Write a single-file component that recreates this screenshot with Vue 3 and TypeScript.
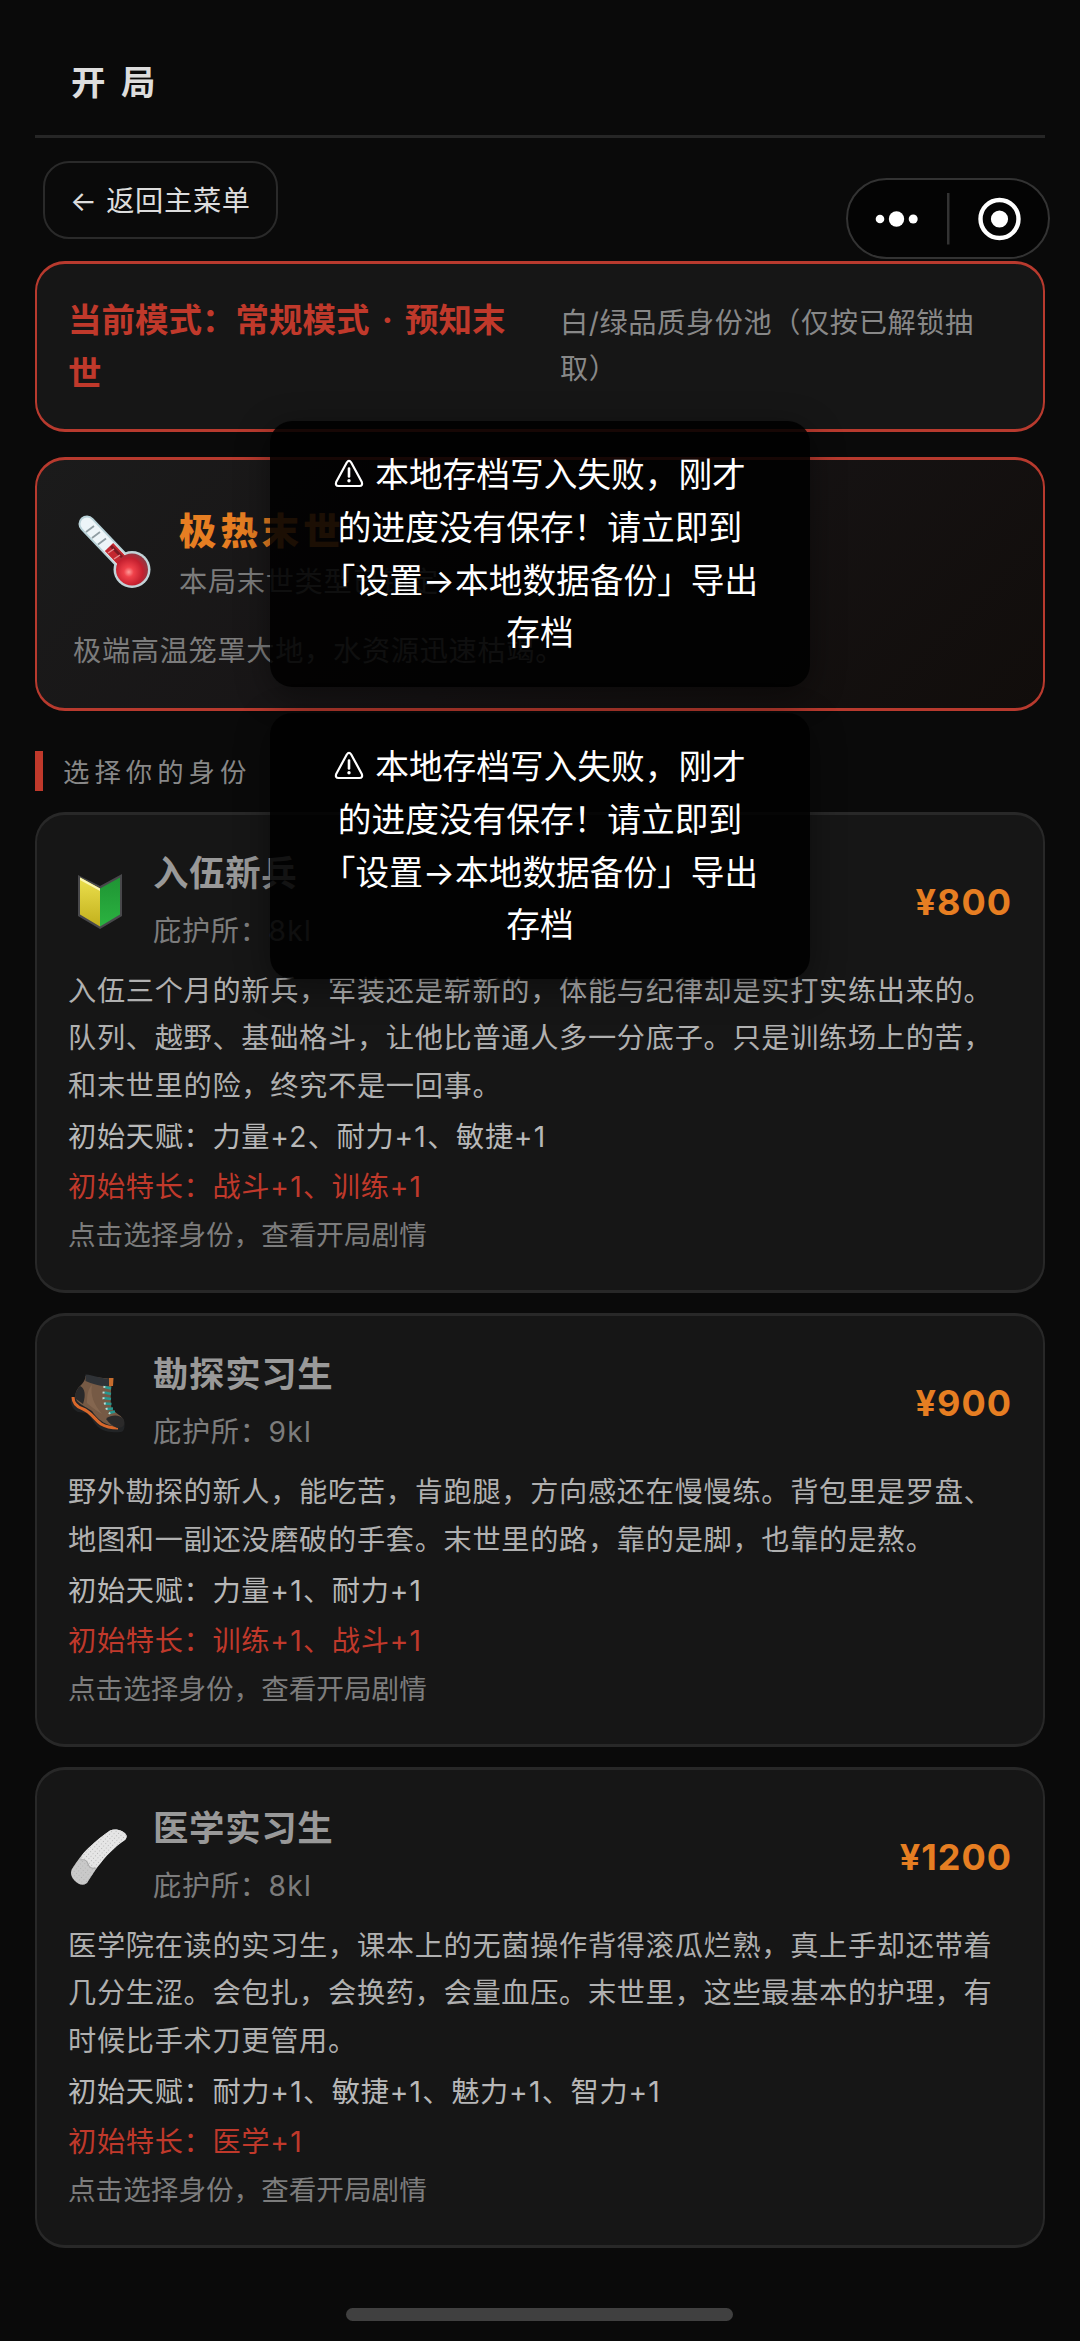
<script setup lang="ts">
interface Role {
  icon: 'badge' | 'boot' | 'bandage'
  name: string
  shelter: string
  price: string
  desc: string[]
  talent: string
  special: string
}

const roles: Role[] = [
  {
    icon: 'badge',
    name: '入伍新兵',
    shelter: '8kl',
    price: '¥800',
    desc: [
      '入伍三个月的新兵，军装还是崭新的，体能与纪律却是实打实练出来的。',
      '队列、越野、基础格斗，让他比普通人多一分底子。只是训练场上的苦，',
      '和末世里的险，终究不是一回事。',
    ],
    talent: '力量+2、耐力+1、敏捷+1',
    special: '战斗+1、训练+1',
  },
  {
    icon: 'boot',
    name: '勘探实习生',
    shelter: '9kl',
    price: '¥900',
    desc: [
      '野外勘探的新人，能吃苦，肯跑腿，方向感还在慢慢练。背包里是罗盘、',
      '地图和一副还没磨破的手套。末世里的路，靠的是脚，也靠的是熬。',
    ],
    talent: '力量+1、耐力+1',
    special: '训练+1、战斗+1',
  },
  {
    icon: 'bandage',
    name: '医学实习生',
    shelter: '8kl',
    price: '¥1200',
    desc: [
      '医学院在读的实习生，课本上的无菌操作背得滚瓜烂熟，真上手却还带着',
      '几分生涩。会包扎，会换药，会量血压。末世里，这些最基本的护理，有',
      '时候比手术刀更管用。',
    ],
    talent: '耐力+1、敏捷+1、魅力+1、智力+1',
    special: '医学+1',
  },
]

const toasts: string[][] = [
  ['本地存档写入失败，刚才', '的进度没有保存！请立即到', '「设置→本地数据备份」导出', '存档'],
  ['本地存档写入失败，刚才', '的进度没有保存！请立即到', '「设置→本地数据备份」导出', '存档'],
]

// Splits a bonus list so the "+n" parts can be tracked a little wider.
const parts = (text: string): string[] => text.split(/(\+\d)/).filter(Boolean)
</script>

<template>
  <div class="page">
    <header class="header"><h1>开局</h1></header>

    <button class="back"><span class="arrow">←</span> 返回主菜单</button>

    <section class="card mode">
      <div class="mode-name">当前模式：常规模式 · 预知末<br />世</div>
      <div class="mode-pool">白/绿品质身份池（仅按已解锁抽<br />取）</div>
    </section>

    <section class="card doom">
      <div class="doom-head">
        <svg class="thermo" viewBox="0 0 74 74">
          <defs>
            <radialGradient id="bulb" cx="40%" cy="58%" r="62%">
              <stop offset="0" stop-color="#ff9a98" />
              <stop offset=".25" stop-color="#f0414a" />
              <stop offset=".7" stop-color="#c4202f" />
              <stop offset="1" stop-color="#8f3a44" />
            </radialGradient>
          </defs>
          <path d="M9 9 L50 52" stroke="#b9d2d8" stroke-width="17" stroke-linecap="round" />
          <circle cx="54" cy="54.500" r="18.500" fill="#c3d3d8" />
          <path d="M9 9 L50 52" stroke="#edf5f8" stroke-width="13" stroke-linecap="round" />
          <path d="M31 32 L50 52" stroke="#c3272f" stroke-width="11.500" />
          <path d="M33 31 L50 48" stroke="#7c1a22" stroke-width="3" />
          <path d="M8 17 L16 11 M14 23 L22 17 M20 29.500 L28 23.500" stroke="#8f9da2" stroke-width="1.800" />
          <path d="M30 38 L36 34 M36 44 L42 40" stroke="#e58a8c" stroke-width="1.500" />
          <circle cx="54" cy="54.500" r="16" fill="url(#bulb)" />
        </svg>
        <div>
          <div class="doom-name">极热末世</div>
          <div class="doom-sub">本局末世类型已锁定</div>
        </div>
      </div>
      <div class="doom-desc">极端高温笼罩大地，水资源迅速枯竭。</div>
    </section>

    <h2 class="section-title">选择你的身份</h2>

    <section v-for="role in roles" :key="role.name" class="card role">
      <div class="role-head">
        <svg v-if="role.icon === 'badge'" class="role-icon" viewBox="0 0 60 60">
          <defs>
            <linearGradient id="yl" x1="0" y1="0" x2="0" y2="1">
              <stop offset="0" stop-color="#ece04e" />
              <stop offset="1" stop-color="#c2b01c" />
            </linearGradient>
            <linearGradient id="gr" x1="0" y1="0" x2="0" y2="1">
              <stop offset="0" stop-color="#1f9434" />
              <stop offset="1" stop-color="#2bb340" />
            </linearGradient>
          </defs>
          <path d="M10 3 L32 14 L54 2 L54 44 L32 57 L10 44 Z" fill="#48484b" />
          <path d="M12 5.500 L32 16.500 L32 54.500 L12 42.500 Z" fill="url(#yl)" />
          <path d="M52 5.500 L32 16.500 L32 54.500 L52 42.500 Z" fill="url(#gr)" />
          <path d="M12 5.500 L32 16.500 L32 19 L12 8 Z" fill="#fbf6b0" />
        </svg>
        <svg v-else-if="role.icon === 'boot'" class="role-icon" viewBox="0 0 60 60">
          <path d="M3 25 C2 31 5 37 10 39 L18 40 C23 43 25 49 30 54 C36 59 46 60 53 59 C57 58 57 52 56 48 L40 46 L12 22 Z" fill="#222426" />
          <path d="M5 24 C5 30 9 34 15 36 C23 39 26 46 33 51 C38 54 44 55 50 55" fill="none" stroke="#d9682b" stroke-width="3" />
          <path d="M17.500 3 L44 6 C43 17 42 27 43.500 35 C47 41 55 42 56 49 C55 54 47 54 41 52 C33 49 28 44 24 38 C20 35 14 33 9 28 C6 22 8 17 12 13 C15 10 17 8 17.500 3 Z" fill="#765a45" />
          <path d="M24 12 C22 22 26 32 34 41 C29 38 22 33 19 30 C19 22 20 16 24 12 Z" fill="#84664f" />
          <path d="M12 13 C17 15 18 22 15 31 L8 26 C6 22 8 17 12 13 Z" fill="#29292a" />
          <path d="M17.500 1.500 C26 2 34 6 42 6 L41 13 C33 14 25 11 17.500 8 Z" fill="#2f3236" />
          <path d="M41 5 L45.500 5 L45 13 L41 13 Z" fill="#c66c2d" />
          <path d="M38 46 C44 41 52 42 55.500 46 C58 52 55 55 49 55 C44 53 41 50 38 46 Z" fill="#2b2a2a" />
          <path d="M37 14 L43 15.500 M36.500 19.500 L43 21 M36 25 L43 26 M37 30.500 L43.500 31 M39 36 L45 35.500 M41 40 L47 38.500" stroke="#27968e" stroke-width="2.400" />
          <path d="M36.500 13 L35.500 20 L35.500 26 L37 31 L39 37 L42 41" fill="none" stroke="#b9ddd6" stroke-width="2" stroke-dasharray="2 3.600" />
        </svg>
        <svg v-else class="role-icon" viewBox="0 0 60 60">
          <defs>
            <pattern id="holes" width="3.200" height="3.200" patternUnits="userSpaceOnUse" patternTransform="rotate(40)">
              <circle cx="1.200" cy="1.200" r=".55" fill="#b0b0b0" />
            </pattern>
          </defs>
          <path d="M4 42 C9 34 15 26 21 20.500 C28 14 35 8 42 3.500 C48 1 57 4 58.700 9 C58.500 12 57 13 54 15 C47 20 40 27 35 33 C29 40 24 48 20 54.500 C18 59 11 58.500 7 54 C3 50 2 46 4 42 Z" fill="#c9c9c9" />
          <path d="M13.500 29 C16 25 18.500 23 21 20.500 C28 14 35 8 42 3.500 C48 1 57 4 58.700 9 C58.500 12 57 13 54 15 C47 20 40 27 35 33 C32 37 30 39 28 41 C24 42 21 40 20 37 C18 34 16 33 13.500 33 Z" fill="#e6e6e6" />
          <path d="M4 42 C9 34 15 26 21 20.500 C28 14 35 8 42 3.500 C48 1 57 4 58.700 9 C58.500 12 57 13 54 15 C47 20 40 27 35 33 C29 40 24 48 20 54.500 C18 59 11 58.500 7 54 C3 50 2 46 4 42 Z" fill="url(#holes)" />
          <path d="M12.500 33 C17 32 19 34 20 37 C21 40 24 42 28 41" fill="none" stroke="#a8a8a8" stroke-width="1.100" />
        </svg>
        <div class="role-info">
          <div class="role-name">{{ role.name }}</div>
          <div class="role-shelter">庇护所：<span class="num">{{ role.shelter }}</span></div>
        </div>
        <div class="role-price">{{ role.price }}</div>
      </div>
      <div class="role-desc">
        <div v-for="line in role.desc" :key="line">{{ line }}</div>
      </div>
      <div class="role-talent">初始天赋：<span v-for="(p, i) in parts(role.talent)" :key="i" :class="{ num: p[0] === '+' }">{{ p }}</span></div>
      <div class="role-special">初始特长：<span v-for="(p, i) in parts(role.special)" :key="i" :class="{ num: p[0] === '+' }">{{ p }}</span></div>
      <div class="role-hint">点击选择身份，查看开局剧情</div>
    </section>

    <div class="capsule">
      <svg viewBox="0 0 204 82">
        <circle cx="34" cy="41" r="4.300" fill="#fff" />
        <circle cx="50.500" cy="41" r="7.700" fill="#fff" />
        <circle cx="67.200" cy="41" r="4.500" fill="#fff" />
        <rect x="101" y="15" width="2.500" height="51.500" fill="#333" />
        <circle cx="153.500" cy="41" r="19" fill="none" stroke="#fff" stroke-width="4.400" />
        <circle cx="153.500" cy="41" r="8.600" fill="#fff" />
      </svg>
    </div>

    <div class="toasts">
      <div v-for="(toast, i) in toasts" :key="i" class="toast">
        <div v-for="(line, j) in toast" :key="line" class="toast-line">
          <svg v-if="j === 0" class="warn" viewBox="0 0 30 30">
            <path d="M12.800 3.500 Q15 .2 17.200 3.500 L27.800 23 Q29 27 25.500 27 L4.500 27 Q1 27 2.200 23 Z" fill="none" stroke="#fff" stroke-width="2.200" stroke-linejoin="round" />
            <path d="M15 9.500 L15 17.500" stroke="#fff" stroke-width="2.600" stroke-linecap="round" />
            <circle cx="15" cy="21.800" r="1.700" fill="#fff" />
          </svg>{{ line }}
        </div>
      </div>
    </div>

    <div class="home-bar"></div>
  </div>
</template>

<style>
body {
  background: #0a0a0a;
}
</style>

<style scoped>
.page {
  position: relative;
  box-sizing: border-box;
  width: 1080px;
  height: 2341px;
  padding: 0 35px;
  overflow: hidden;
  background: #0a0a0a;
  color: #ddd;
  font-family: Inter, 'Noto Sans CJK SC', sans-serif;
  font-size: 28.200px;
  letter-spacing: 0.700px;
  white-space: nowrap;
}
.num {
  letter-spacing: 1.300px;
}
.header {
  box-sizing: border-box;
  height: 138px;
  padding: 58px 0 0 36px;
  border-bottom: 3px solid #262626;
}
h1 {
  margin: 0;
  font-size: 34.500px;
  line-height: 50px;
  font-weight: 700;
  letter-spacing: 15.500px;
  color: #ddd;
}
.back {
  display: block;
  box-sizing: border-box;
  width: 235px;
  height: 78px;
  margin: 23px 0 22px 8px;
  padding: 0 0 0 25px;
  border: 2px solid #2a2a2a;
  border-radius: 26px;
  background: transparent;
  color: #ddd;
  font: inherit;
  letter-spacing: inherit;
  line-height: 76px;
  text-align: left;
}
.card {
  box-sizing: border-box;
  border: solid #282828;
  border-width: 3px 2px;
  border-radius: 30px;
  background: #161616;
}
.mode {
  display: flex;
  height: 171px;
  padding: 30px 31px;
  border-color: #b83a2e;
}
.mode-name {
  width: 492px;
  font-size: 33.500px;
  line-height: 52.500px;
  font-weight: 700;
  letter-spacing: 0;
  word-spacing: 4.200px;
  color: #c0392b;
}
.mode-pool {
  padding-top: 6px;
  line-height: 46px;
  letter-spacing: 0.600px;
  color: #888;
}
.doom {
  height: 254px;
  margin-top: 25px;
  padding: 38px 36px 0;
  border-color: #b83a2e;
  background: linear-gradient(135deg, #1b1b1b, #171415 50%, #110d0b);
}
.doom-head {
  display: flex;
  height: 124px;
}
.thermo {
  width: 74px;
  height: 74px;
  margin: 17px 27px 0 5px;
}
.doom-name {
  margin-top: 5px;
  font-size: 37.400px;
  line-height: 58px;
  font-weight: 900;
  letter-spacing: 4px;
  color: #e67e22;
}
.doom-sub {
  margin-top: -2px;
  line-height: 46px;
  color: #7c7c7c;
}
.doom-desc {
  margin-top: 6px;
  line-height: 46px;
  color: #7c7c7c;
}
.section-title {
  box-sizing: border-box;
  height: 40px;
  margin: 40px 0 21px;
  padding-left: 20px;
  border-left: 8px solid #c0392b;
  font-size: 26.400px;
  line-height: 42px;
  font-weight: 400;
  letter-spacing: 5px;
  color: #888;
}
.role {
  margin-bottom: 20.600px;
  padding: 25px 31px 32px 31px;
}
.role-head {
  display: flex;
  align-items: center;
  height: 124px;
  margin-bottom: 3.500px;
}
.role-icon {
  width: 60px;
  height: 60px;
  margin-right: 25px;
}
.role-info {
  flex: 1;
  margin-top: -6px;
}
.role-name {
  font-size: 35.400px;
  line-height: 58px;
  font-weight: 700;
  color: #999;
}
.role-shelter {
  margin-top: 5px;
  line-height: 46px;
  color: #7c7c7c;
}
.role-price {
  font-size: 36px;
  line-height: 48px;
  font-weight: 700;
  letter-spacing: 1px;
  color: #e67e22;
}
.role-desc {
  line-height: 47.800px;
  color: #b0b0b0;
}
.role-talent,
.role-special {
  margin-top: 3px;
  line-height: 47px;
  color: #b8b8b8;
}
.role-special {
  color: #c0392b;
}
.role-hint {
  margin-top: 2px;
  font-size: 27.600px;
  letter-spacing: 0;
  line-height: 45px;
  color: #7c7c7c;
}
.capsule {
  position: absolute;
  top: 178px;
  left: 846px;
  box-sizing: border-box;
  width: 204px;
  height: 81px;
  border: 2px solid #333;
  border-radius: 41px;
  background: #040404;
}
.capsule svg {
  display: block;
  width: 204px;
  height: 82px;
  margin: -2px 0 0 -2px;
}
.toasts {
  position: absolute;
  top: 421px;
  left: 270px;
  display: flex;
  flex-direction: column;
  gap: 26px;
}
.toast {
  box-sizing: border-box;
  width: 540px;
  height: 266px;
  padding-top: 28px;
  border-radius: 22px;
  background: rgba(0, 0, 0, 0.88);
  box-shadow: 0 8px 34px rgba(0, 0, 0, 0.4);
  color: #fff;
  font-size: 33.700px;
  letter-spacing: 0;
  line-height: 52.800px;
  text-align: center;
}
.warn {
  width: 30px;
  height: 30px;
  margin-right: 11px;
  vertical-align: -2px;
}
.home-bar {
  position: absolute;
  left: 346px;
  top: 2308px;
  width: 387px;
  height: 13px;
  border-radius: 7px;
  background: #404040;
}
</style>
